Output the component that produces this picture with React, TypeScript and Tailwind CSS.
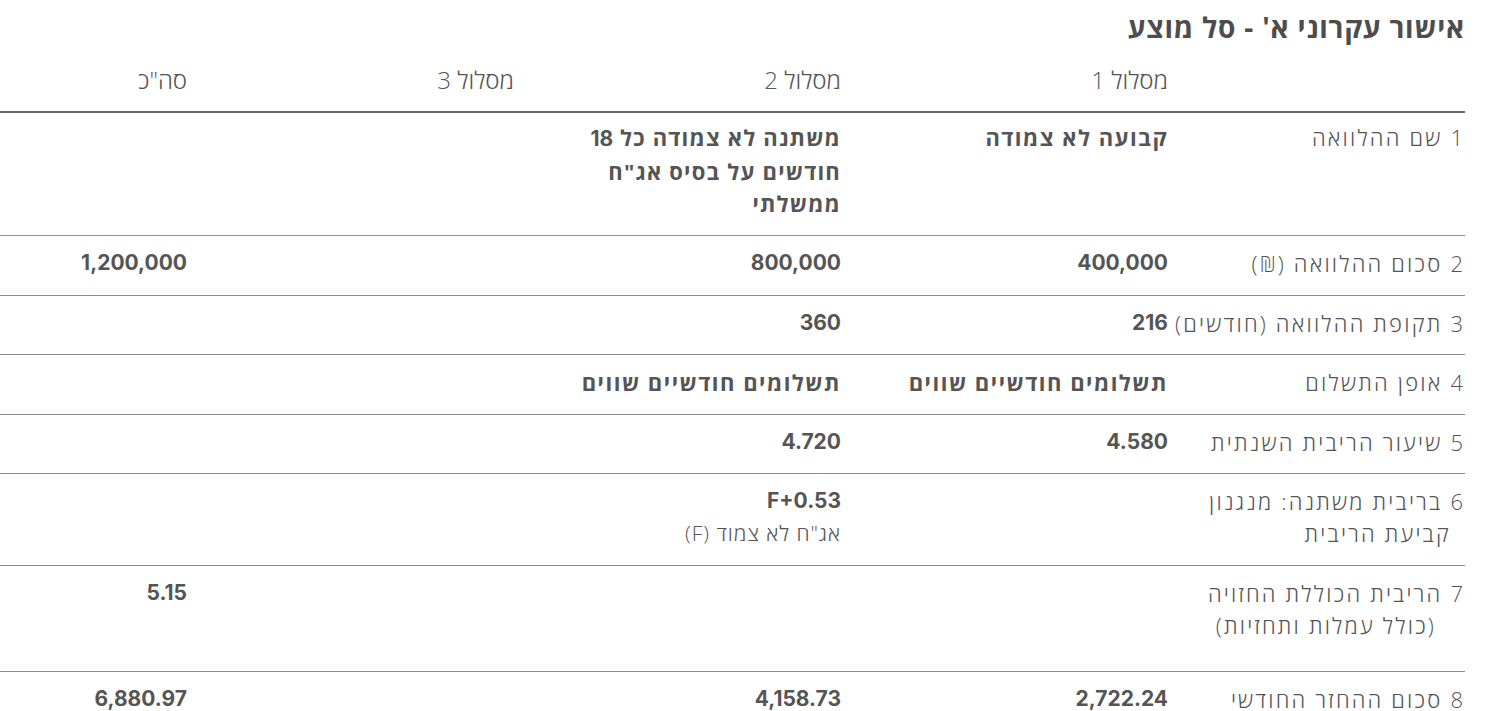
import React from "react";

type Row = {
  n: number;
  label: string[];
  second?: string;
  cells: React.ReactNode[];
  pad?: string;
};

const N = ({ children }: { children: React.ReactNode }) => (
  <div className="font-['Inter','Open_Sans',sans-serif] font-bold text-[21px] leading-[32px]">{children}</div>
);
const H = ({ children }: { children: React.ReactNode }) => (
  <div className="font-['Open_Sans',sans-serif] font-bold text-[22px] leading-[32px] tracking-[1.5px]">{children}</div>
);

const rows: Row[] = [
  {
    n: 1,
    label: ["שם ההלוואה"],
    pad: "pt-[8px] pb-[16px]",
    cells: [
      <H>קבועה לא צמודה</H>,
      <div className="font-['Open_Sans',sans-serif] font-bold text-[22px] leading-[32px] tracking-[1.2px]">
        <div>
          משתנה לא צמודה כל{" "}
          <span className="font-['Inter','Open_Sans',sans-serif] text-[21px] tracking-normal">18</span>
        </div>
        <div>חודשים על בסיס אג"ח</div>
        <div>ממשלתי</div>
      </div>,
      null,
      null,
    ],
  },
  {
    n: 2,
    label: ["סכום ההלוואה (₪)"],
    cells: [<N>400,000</N>, <N>800,000</N>, null, <N>1,200,000</N>],
  },
  {
    n: 3,
    label: ["תקופת ההלוואה (חודשים)"],
    pad: "pt-[11px] pb-[15px]",
    cells: [<N>216</N>, <N>360</N>, null, null],
  },
  {
    n: 4,
    label: ["אופן התשלום"],
    cells: [<H>תשלומים חודשיים שווים</H>, <H>תשלומים חודשיים שווים</H>, null, null],
  },
  {
    n: 5,
    label: ["שיעור הריבית השנתית"],
    pad: "pt-[11px] pb-[15px]",
    cells: [<N>4.580</N>, <N>4.720</N>, null, null],
  },
  {
    n: 6,
    label: ["בריבית משתנה: מנגנון", "קביעת הריבית"],
    second: "mr-[12px]",
    cells: [
      null,
      <div>
        <N>F+0.53</N>
        <div className="font-light text-[21px] leading-[32px] tracking-[1px]">אג"ח לא צמוד (F)</div>
      </div>,
      null,
      null,
    ],
  },
  {
    n: 7,
    label: ["הריבית הכוללת החזויה", "(כולל עמלות ותחזיות)"],
    second: "mr-[27px]",
    pad: "pt-[11px] pb-[30px]",
    cells: [null, null, null, <N>5.15</N>],
  },
  {
    n: 8,
    label: ["סכום ההחזר החודשי"],
    pad: "pt-[11px] pb-0",
    cells: [<N>2,722.24</N>, <N>4,158.73</N>, null, <N>6,880.97</N>],
  },
];

const grid = "grid grid-cols-[290px_327px_327px_327px_194px]";

export default function App() {
  return (
    <div
      dir="rtl"
      className="w-[1485px] h-[711px] overflow-hidden bg-white pr-[20px] text-[#555] font-['Open_Sans',sans-serif]"
    >
      <h1 className="pt-[9px] text-[28px] leading-[36px] font-bold tracking-[0.8px] text-[#4d4d4d]">
        אישור עקרוני א' - סל מוצע
      </h1>
      <div
        className={`${grid} pt-[22px] pb-[18px] border-b-2 border-[#666] text-[24px] leading-[26px] font-light`}
      >
        <div />
        <div className="pr-[7px]">מסלול 1</div>
        <div className="pr-[7px]">מסלול 2</div>
        <div className="pr-[7px]">מסלול 3</div>
        <div className="pr-[7px]">סה"כ</div>
      </div>
      {rows.map((r, i) => (
        <div
          key={r.n}
          className={`${grid} ${r.pad ?? "pt-[11px] pb-[16px]"} ${
            i < rows.length - 1 ? "border-b border-[#8c8c8c]" : ""
          } text-[22px] leading-[32px]`}
        >
          <div className="font-light tracking-[2.2px] pr-[2px]">
            <div>
              <span className="ml-[8px] tracking-normal">{r.n}</span>
              {r.label[0]}
            </div>
            {r.label[1] && <div className={r.second}>{r.label[1]}</div>}
          </div>
          {r.cells.map((c, j) => (
            <div key={j} className="pr-[7px]">
              {c}
            </div>
          ))}
        </div>
      ))}
    </div>
  );
}
